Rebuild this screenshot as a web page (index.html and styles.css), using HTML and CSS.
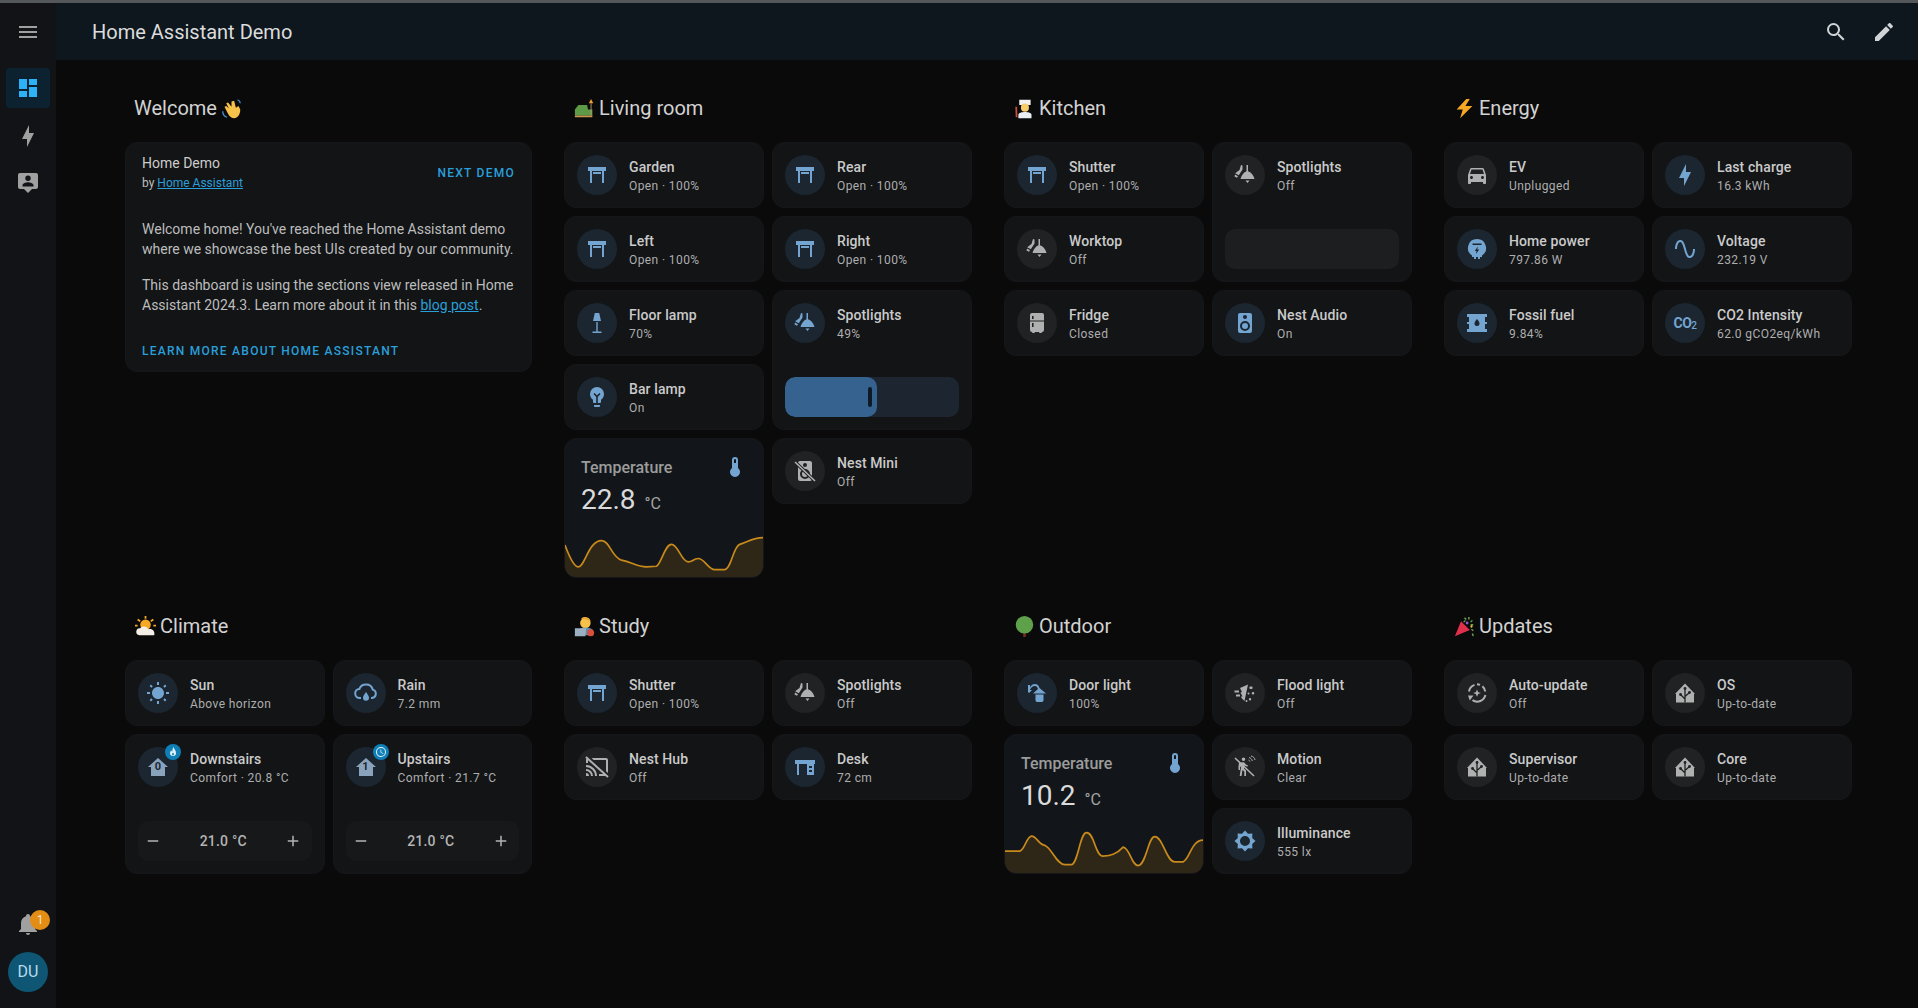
FILE: index.html
```html
<!DOCTYPE html>
<html>
  <head>
    <title>Home Assistant Demo</title>
    <link rel="stylesheet" href="styles.css">
  </head>
  <body>
    <svg class="icon-defs">
      <symbol id="i-menu" viewBox="0 0 24 24"><path d="M3,6H21V8H3V6M3,11H21V13H3V11M3,16H21V18H3V16Z"/></symbol>
      <symbol id="i-dashboard" viewBox="0 0 24 24"><path d="M13,3V9H21V3M13,21H21V11H13M3,21H11V15H3M3,13H11V3H3V13Z"/></symbol>
      <symbol id="i-bolt" viewBox="0 0 24 24"><path d="M11,15H6L13,1V9H18L11,23V15Z"/></symbol>
      <symbol id="i-person-msg" viewBox="0 0 24 24"><path fill-rule="evenodd" d="M4 2H20C21.1 2 22 2.9 22 4V16C22 17.1 21.1 18 20 18H16L12 22L8 18H4C2.9 18 2 17.1 2 16V4C2 2.9 2.9 2 4 2ZM12 4.5A2.7 2.7 0 1 0 12 9.9A2.7 2.7 0 1 0 12 4.5ZM6.5 15.5H17.5V14.2C17.5 12.3 14 11.3 12 11.3C10 11.3 6.5 12.3 6.5 14.2Z"/></symbol>
      <symbol id="i-search" viewBox="0 0 24 24"><path d="M9.5,3A6.5,6.5 0 0,1 16,9.5C16,11.11 15.41,12.59 14.44,13.73L14.71,14H15.5L20.5,19L19,20.5L14,15.5V14.71L13.73,14.44C12.59,15.41 11.11,16 9.5,16A6.5,6.5 0 0,1 3,9.5A6.5,6.5 0 0,1 9.5,3M9.5,5C7,5 5,7 5,9.5C5,12 7,14 9.5,14C12,14 14,12 14,9.5C14,7 12,5 9.5,5Z"/></symbol>
      <symbol id="i-pencil" viewBox="0 0 24 24"><path d="M20.71,7.04C21.1,6.65 21.1,6 20.71,5.63L18.37,3.29C18,2.9 17.35,2.9 16.96,3.29L15.12,5.12L18.87,8.87M3,17.25V21H6.75L17.81,9.93L14.06,6.18L3,17.25Z"/></symbol>
      <symbol id="i-bell" viewBox="0 0 24 24"><path d="M21,19V20H3V19L5,17V11C5,7.9 7.03,5.17 10,4.29C10,4.19 10,4.1 10,4A2,2 0 0,1 12,2A2,2 0 0,1 14,4C14,4.1 14,4.19 14,4.29C16.97,5.17 19,7.9 19,11V17L21,19M14,21A2,2 0 0,1 12,23A2,2 0 0,1 10,21"/></symbol>
      <symbol id="i-shutter" viewBox="0 0 24 24"><path d="M3 4H21V8H19V20H17V8H7V20H5V8H3V4M8 9H16V11H8V9Z"/></symbol>
      <symbol id="i-floorlamp" viewBox="0 0 24 24"><path d="M9.8 2H14.2L16 10H8L9.8 2M11.3 11H12.7V20.5H16.5V22H7.5V20.5H11.3V11Z"/></symbol>
      <symbol id="i-spots" viewBox="0 0 24 24"><path d="M13.5 2H15V8.2C18 9 20.5 12 21.5 16H7.5C8.5 12 11 9 13.5 8.2ZM12.5 17.5H16.5L14.5 20ZM8 2L9.5 2.6V6.5L5.8 12.2L2.2 10.2L6.5 7ZM2 11.5L5 13.2L4 14.8L1.5 13.4Z"/></symbol>
      <symbol id="i-bulb" viewBox="0 0 24 24"><path d="M12,2A7,7 0 0,0 5,9C5,11.38 6.19,13.47 8,14.74V17A1,1 0 0,0 9,18H15A1,1 0 0,0 16,17V14.74C17.81,13.47 19,11.38 19,9A7,7 0 0,0 12,2M9,21A1,1 0 0,0 10,22H14A1,1 0 0,0 15,21V20H9V21Z"/><path d="M9 8.5L12 11.5L15 8.5M12 11.5V18" fill="none" stroke="#1a2530" stroke-width="1.6"/></symbol>
      <symbol id="i-speaker" viewBox="0 0 24 24"><path d="M12,12A3,3 0 0,0 9,15A3,3 0 0,0 12,18A3,3 0 0,0 15,15A3,3 0 0,0 12,12M12,20A5,5 0 0,1 7,15A5,5 0 0,1 12,10A5,5 0 0,1 17,15A5,5 0 0,1 12,20M12,4A2,2 0 0,1 14,6A2,2 0 0,1 12,8C10.89,8 10,7.1 10,6C10,4.89 10.89,4 12,4M17,2H7C5.89,2 5,2.89 5,4V20A2,2 0 0,0 7,22H17A2,2 0 0,0 19,20V4C19,2.89 18.1,2 17,2Z"/></symbol>
      <symbol id="i-speaker-off" viewBox="0 0 24 24"><path d="M12,12A3,3 0 0,0 9,15A3,3 0 0,0 12,18A3,3 0 0,0 15,15A3,3 0 0,0 12,12M12,20A5,5 0 0,1 7,15A5,5 0 0,1 12,10A5,5 0 0,1 17,15A5,5 0 0,1 12,20M12,4A2,2 0 0,1 14,6A2,2 0 0,1 12,8C10.89,8 10,7.1 10,6C10,4.89 10.89,4 12,4M17,2H7C5.89,2 5,2.89 5,4V20A2,2 0 0,0 7,22H17A2,2 0 0,0 19,20V4C19,2.89 18.1,2 17,2Z"/><path d="M2 3L22 22" stroke="#202223" stroke-width="3.4"/><path d="M2 3L22 22" stroke="currentColor" stroke-width="1.6"/></symbol>
      <symbol id="i-fridge" viewBox="0 0 24 24"><path d="M7 2H17A2 2 0 0 1 19 4V9.5H5V4A2 2 0 0 1 7 2ZM5 10.5H19V19A2 2 0 0 1 17 21L16.5 22H14.5L14 21H10L9.5 22H7.5L7 21A2 2 0 0 1 5 19ZM7 5V8H8.6V5ZM7 12V16H8.6V12Z" fill-rule="evenodd"/></symbol>
      <symbol id="i-car" viewBox="0 0 24 24"><path d="M18.92 6.01C18.72 5.42 18.16 5 17.5 5H6.5C5.84 5 5.29 5.42 5.08 6.01L3 12V20C3 20.55 3.45 21 4 21H5C5.55 21 6 20.55 6 20V19H18V20C18 20.55 18.45 21 19 21H20C20.55 21 21 20.55 21 20V12L18.92 6.01M6.5 16C5.67 16 5 15.33 5 14.5S5.67 13 6.5 13 8 13.67 8 14.5 7.33 16 6.5 16M17.5 16C16.67 16 16 15.33 16 14.5S16.67 13 17.5 13 19 13.67 19 14.5 18.33 16 17.5 16M5 11L6.5 6.5H17.5L19 11H5Z"/></symbol>
      <symbol id="i-meter" viewBox="0 0 24 24"><path fill-rule="evenodd" d="M12 2A9 9 0 0 1 17 18.5V20H15V22H13V20H11V22H9V20H7V18.5A9 9 0 0 1 12 2ZM7.5 6.5V8H16.5V6.5ZM12.8 9.5L9.8 14H11.5L11 17L14.2 12.5H12.3Z"/></symbol>
      <symbol id="i-sine" viewBox="0 0 24 24"><path d="M16.5,21C13.5,21 12.31,16.76 11.05,12.28C10.14,9.04 9,5 7.5,5C4.11,5 4,11.93 4,12H2C2,11.63 2.06,3 7.5,3C10.5,3 11.71,7.25 12.97,11.74C13.83,14.8 15,19 16.5,19C19.94,19 20.03,12.07 20.03,12H22.03C22.03,12.37 21.97,21 16.5,21Z"/></symbol>
      <symbol id="i-barrel" viewBox="0 0 24 24"><path fill-rule="evenodd" d="M2 3H22V6H20V11H22V13H20V18H22V21H2V18H4V13H2V11H4V6H2ZM12 8C10.5 10 9.5 11.2 9.5 12.6A2.5 2.5 0 0 0 14.5 12.6C14.5 11.2 13.5 10 12 8Z"/></symbol>
      <symbol id="i-sun" viewBox="0 0 24 24"><path d="M3.55 19.09L4.96 20.5L6.76 18.71L5.34 17.29M12 6C8.69 6 6 8.69 6 12S8.69 18 12 18 18 15.31 18 12C18 8.68 15.31 6 12 6M20 13H23V11H20M17.24 18.71L19.04 20.5L20.45 19.09L18.66 17.29M20.45 5L19.04 3.6L17.24 5.39L18.66 6.81M13 1H11V4H13M6.76 5.39L4.96 3.6L3.55 5L5.34 6.81L6.76 5.39M1 13H4V11H1M13 20H11V23H13"/></symbol>
      <symbol id="i-rain" viewBox="0 0 24 24"><path d="M7 17H6A4.5 4.5 0 0 1 5.4 8C6.3 5.2 8.9 3.5 12 3.5C15.3 3.5 18 5.6 18.7 8.6A4.3 4.3 0 0 1 18 17H17" fill="none" stroke="currentColor" stroke-width="2"/><path d="M12 11C10.2 13.6 9 15 9 16.7A3 3 0 0 0 15 16.7C15 15 13.8 13.6 12 11Z"/></symbol>
      <symbol id="i-house0" viewBox="0 0 24 24"><path d="M12 3L2 12H5V21H19V12H22Z"/></symbol>
      <symbol id="i-fire" viewBox="0 0 24 24"><path d="M13 2C13.5 6 18 8 18 14A6 6 0 0 1 6 14C6 11.5 7.5 10 8.5 8.5C9 10 9.5 11 10.5 11.5C11 8.5 11 5 13 2ZM12 13C11 14.5 10 15.3 10 16.5A2 2 0 0 0 14 16.5C14 15.3 13 14.5 12 13Z" fill-rule="evenodd"/></symbol>
      <symbol id="i-clock" viewBox="0 0 24 24"><path d="M12,20A8,8 0 0,0 20,12A8,8 0 0,0 12,4A8,8 0 0,0 4,12A8,8 0 0,0 12,20M12,2A10,10 0 0,1 22,12A10,10 0 0,1 12,22C6.47,22 2,17.5 2,12A10,10 0 0,1 12,2M12.5,7V12.25L17,14.92L16.25,16.15L11,13V7H12.5Z"/></symbol>
      <symbol id="i-minus" viewBox="0 0 24 24"><path d="M19,13H5V11H19V13Z"/></symbol>
      <symbol id="i-plus" viewBox="0 0 24 24"><path d="M19,13H13V19H11V13H5V11H11V5H13V11H19V13Z"/></symbol>
      <symbol id="i-cast-off" viewBox="0 0 24 24"><path d="M1.6,1.27L0.25,2.75L1.41,3.8C1.16,4.13 1,4.55 1,5V8H3V5.23L18.2,19H14V21H20.41L22.31,22.72L23.65,21.24M6.5,3L8.7,5H21V16.14L23,17.95V5C23,3.89 22.1,3 21,3M1,10V12A9,9 0 0,1 10,21H12C12,14.92 7.08,10 1,10M1,14V16A5,5 0 0,1 6,21H8A7,7 0 0,0 1,14M1,18V21H4A3,3 0 0,0 1,18Z"/></symbol>
      <symbol id="i-desk" viewBox="0 0 24 24"><path fill-rule="evenodd" d="M2 5H22V9H21V20H14V9H6V20H4V9H2ZM16 11V13H19V11ZM16 15V17H19V15Z"/></symbol>
      <symbol id="i-doorlight" viewBox="0 0 24 24"><path d="M3 11V4H5V6.5C6 4 8 3 10 3C12 3 14 4.5 14.5 7L21 12.5H8L13 8C12.5 6 11.3 5 10 5C7.5 5 5.5 7 5 9L7 9L4 12ZM10.5 13.5H18.5V19C18.5 20.5 17.5 21 16.5 21H12.5C11.5 21 10.5 20.5 10.5 19Z"/></symbol>
      <symbol id="i-flood" viewBox="0 0 24 24"><path d="M1.5 9.5H6V11.5H1.5ZM3 13.5H7V15.5H3ZM7 7L15 3.5L11.5 20L8.5 17L8 15.5H9.5L7.5 11.5L9 11ZM18 5.5A1.3 1.3 0 1 0 18 8A1.3 1.3 0 1 0 18 5.5ZM20 11A1.3 1.3 0 1 0 20 13.6A1.3 1.3 0 1 0 20 11ZM15.5 11.5A1 1 0 1 0 15.5 13.5A1 1 0 1 0 15.5 11.5ZM17 17A1.2 1.2 0 1 0 17 19.4A1.2 1.2 0 1 0 17 17ZM13.5 19A1 1 0 1 0 13.5 21A1 1 0 1 0 13.5 19Z"/></symbol>
      <symbol id="i-motion-off" viewBox="0 0 24 24"><path d="M10.5 2.5A1.8 1.8 0 1 0 10.5 6.1A1.8 1.8 0 1 0 10.5 2.5ZM6 7.5L11 7.3L13 9.5L15 10.5L14.3 11.8L11.6 10.5L11 13.5L13 15.5V21H11.3V16.5L9.5 15L8.5 21H6.7L8.2 11L7 12.5V15H5.5V11.5L6 7.5Z"/><path d="M2 3L21 21" stroke="currentColor" stroke-width="1.6"/><path d="M16 2.5C17.5 2.8 19 4.2 19.3 6M15.5 5C16.2 5.2 16.8 5.8 17 6.5M18 1C20 1.3 21.8 3 22 5" fill="none" stroke="currentColor" stroke-width="1"/></symbol>
      <symbol id="i-lux" viewBox="0 0 24 24"><path fill-rule="evenodd" d="M12 1.5L15 4.8L19.4 4.6L19.2 9L22.5 12L19.2 15L19.4 19.4L15 19.2L12 22.5L9 19.2L4.6 19.4L4.8 15L1.5 12L4.8 9L4.6 4.6L9 4.8ZM12 7A5 5 0 1 0 12 17A5 5 0 1 0 12 7Z"/></symbol>
      <symbol id="i-auto" viewBox="0 0 24 24"><path d="M12 8.5L13.2 11.2L16 12L13.2 13L12 15.7L10.8 13L8 12L10.8 11.2Z"/><path d="M4 10.5A8.4 8.4 0 0 1 9.5 3.9M12 3.3A8.4 8.4 0 0 1 15 3.9M17.4 5.2A8.4 8.4 0 0 1 20.2 10.5M20.4 14A8.4 8.4 0 0 1 7.5 19.2" fill="none" stroke="currentColor" stroke-width="2"/><path d="M3 14.5H8.5L4.8 19.5Z"/></symbol>
      <symbol id="i-ha" viewBox="0 0 24 24"><path d="M2 13L12 2.5L22 13H21V21.5H3V13Z"/><path d="M12 21.5V7M12 18L7.5 13.5M12 15.5L16.5 11.5" fill="none" stroke="#202223" stroke-width="1.3"/><circle cx="12" cy="7.5" r="1.4" fill="#202223"/><circle cx="7.5" cy="13.5" r="1.4" fill="#202223"/><circle cx="16.5" cy="11.5" r="1.4" fill="#202223"/></symbol>
      <symbol id="i-thermo" viewBox="0 0 24 24"><path d="M15 13V5A3 3 0 0 0 9 5V13A5 5 0 1 0 15 13M12 4A1 1 0 0 1 13 5V8H11V5A1 1 0 0 1 12 4Z"/></symbol>

      <symbol id="e-wave" viewBox="0 0 24 24"><path d="M8 5L12 10L12 4L15 3L17 11L20 9L22 13C22 19 19 23 15 23C11 23 9 20 7 16L4 10L6 9L9 12L6 6Z" fill="#f7c24a"/><path d="M2 15C2 18 4 21 7 22M19 2C21 3 22 4 22 6" fill="none" stroke="#4a8fd0" stroke-width="1.5"/></symbol>
      <symbol id="e-sofa" viewBox="0 0 24 24"><path d="M1 13L5 8H15L16 13H21V20H1Z" fill="#5c9a48"/><path d="M1 20H21V22H1Z" fill="#c89a50"/><path d="M17 6L19.5 1L22 6Z" fill="#f0a030"/><path d="M19 6H20V20H19Z" fill="#b8a070"/></symbol>
      <symbol id="e-chef" viewBox="0 0 24 24"><path d="M6 2H19V8H6Z" fill="#f0f0f0"/><circle cx="12.5" cy="11" r="4.6" fill="#f7cc6a"/><path d="M5 23V19C5 17 9 16 12.5 16C16 16 20 17 20 19V23Z" fill="#e8eef2"/><path d="M1.5 10L3.5 10L4 22H2Z" fill="#c8503c"/></symbol>
      <symbol id="e-energy" viewBox="0 0 24 24"><path d="M14 1L3 13H10L7 23L21 9H13L18 1Z" fill="#f7a823"/></symbol>
      <symbol id="e-climate" viewBox="0 0 24 24"><circle cx="12" cy="10" r="6" fill="#f7a823"/><path d="M12 0V3M3 4L6 6M21 4L18 6M0 11H3M24 11H21" stroke="#f7a823" stroke-width="2"/><path d="M5 22A4 4 0 0 1 6 14C8 11 14 11 15 15C20 14 23 17 22 22Z" fill="#f4efe6"/></symbol>
      <symbol id="e-study" viewBox="0 0 24 24"><circle cx="13" cy="8" r="6" fill="#f7c24a"/><path d="M8 3C10 0 18 0 19 6L14 4Z" fill="#e8a83a"/><path d="M6 15C9 13 17 13 21 15L22 22H6Z" fill="#5a8ab8"/><path d="M1 14H14L13 23H1Z" fill="#9ab0c0"/><circle cx="19" cy="19" r="4" fill="#d8503c"/></symbol>
      <symbol id="e-tree" viewBox="0 0 24 24"><path d="M10.5 16H13.5V24H10.5Z" fill="#7a2a1a"/><circle cx="12" cy="10" r="10" fill="#5fa04a"/></symbol>
      <symbol id="e-party" viewBox="0 0 24 24"><path d="M1 23L8 6L18 16Z" fill="#e0304c"/><path d="M12 2L14 4M17 1V4M21 5L19 7M22 10H19M20 15L22 17M21 20L22 23M11 7L13 5" stroke="#6aa84f" stroke-width="1.6"/><circle cx="15" cy="8" r="1.6" fill="#8a5ac8"/><circle cx="20" cy="12" r="1.3" fill="#f7c24a"/></symbol>
    </svg>

    <div class="topstrip"></div>

    <div class="app">
      <nav class="sidebar">
        <div class="side-menu"><svg class="icon"><use href="#i-menu"/></svg></div>
        <div class="side-item active"><svg class="icon"><use href="#i-dashboard"/></svg></div>
        <div class="side-item"><svg class="icon"><use href="#i-bolt"/></svg></div>
        <div class="side-item"><svg class="icon"><use href="#i-person-msg"/></svg></div>
        <div class="side-spacer"></div>
        <div class="side-bell">
          <svg class="icon"><use href="#i-bell"/></svg>
          <span class="bell-badge">1</span>
        </div>
        <div class="avatar">DU</div>
      </nav>

      <div class="main">
        <header class="topbar">
          <div class="topbar-title">Home Assistant Demo</div>
          <svg class="icon"><use href="#i-search"/></svg>
          <svg class="icon"><use href="#i-pencil"/></svg>
        </header>

        <div class="sections">

          <section>
            <h2>Welcome <svg class="emoji"><use href="#e-wave"/></svg></h2>
            <div class="welcome">
              <div class="welcome-head">
                <div>
                  <div class="welcome-title">Home Demo</div>
                  <div class="welcome-by">by <a href="#">Home Assistant</a></div>
                </div>
                <div class="action">NEXT DEMO</div>
              </div>
              <p>Welcome home! You've reached the Home Assistant demo where we showcase the best UIs created by our community.</p>
              <p>This dashboard is using the sections view released in Home Assistant 2024.3. Learn more about it in this <a href="#">blog post</a>.</p>
              <div class="action learn">LEARN MORE ABOUT HOME ASSISTANT</div>
            </div>
          </section>

          <section>
            <h2><svg class="emoji"><use href="#e-sofa"/></svg> Living room</h2>
            <div class="tiles">
              <div class="tile on"><div class="tile-row"><div class="shape"><svg class="icon"><use href="#i-shutter"/></svg></div><div><div class="name">Garden</div><div class="state">Open · 100%</div></div></div></div>
              <div class="tile on"><div class="tile-row"><div class="shape"><svg class="icon"><use href="#i-shutter"/></svg></div><div><div class="name">Rear</div><div class="state">Open · 100%</div></div></div></div>
              <div class="tile on"><div class="tile-row"><div class="shape"><svg class="icon"><use href="#i-shutter"/></svg></div><div><div class="name">Left</div><div class="state">Open · 100%</div></div></div></div>
              <div class="tile on"><div class="tile-row"><div class="shape"><svg class="icon"><use href="#i-shutter"/></svg></div><div><div class="name">Right</div><div class="state">Open · 100%</div></div></div></div>
              <div class="tile on"><div class="tile-row"><div class="shape"><svg class="icon"><use href="#i-floorlamp"/></svg></div><div><div class="name">Floor lamp</div><div class="state">70%</div></div></div></div>
              <div class="tile on tall"><div class="tile-row"><div class="shape"><svg class="icon"><use href="#i-spots"/></svg></div><div><div class="name">Spotlights</div><div class="state">49%</div></div></div>
                <div class="slider"><div class="slider-fill" style="width: 53%"></div></div>
              </div>
              <div class="tile on"><div class="tile-row"><div class="shape"><svg class="icon"><use href="#i-bulb"/></svg></div><div><div class="name">Bar lamp</div><div class="state">On</div></div></div></div>
              <div class="sensor tall">
                <div class="sensor-head"><span>Temperature</span><svg class="icon"><use href="#i-thermo"/></svg></div>
                <div class="sensor-value">22.8 <small>°C</small></div>
                <svg class="chart" viewBox="45 555 595 125" preserveAspectRatio="none">
                  <path class="chart-fill" d="M45 585C60 625 75 650 85 650C105 650 115 572 155 572C180 572 185 622 215 630C245 635 260 650 290 650L320 648C335 640 345 583 365 583C385 583 395 635 415 635C430 635 430 625 445 625C465 625 475 658 495 658L525 658C545 655 550 590 570 583C590 578 610 563 640 563V680H45Z"/>
                  <path class="chart-line" d="M45 585C60 625 75 650 85 650C105 650 115 572 155 572C180 572 185 622 215 630C245 635 260 650 290 650L320 648C335 640 345 583 365 583C385 583 395 635 415 635C430 635 430 625 445 625C465 625 475 658 495 658L525 658C545 655 550 590 570 583C590 578 610 563 640 563"/>
                </svg>
              </div>
              <div class="tile"><div class="tile-row"><div class="shape"><svg class="icon"><use href="#i-speaker-off"/></svg></div><div><div class="name">Nest Mini</div><div class="state">Off</div></div></div></div>
            </div>
          </section>

          <section>
            <h2><svg class="emoji"><use href="#e-chef"/></svg> Kitchen</h2>
            <div class="tiles">
              <div class="tile on"><div class="tile-row"><div class="shape"><svg class="icon"><use href="#i-shutter"/></svg></div><div><div class="name">Shutter</div><div class="state">Open · 100%</div></div></div></div>
              <div class="tile tall"><div class="tile-row"><div class="shape"><svg class="icon"><use href="#i-spots"/></svg></div><div><div class="name">Spotlights</div><div class="state">Off</div></div></div>
                <div class="slider"></div>
              </div>
              <div class="tile"><div class="tile-row"><div class="shape"><svg class="icon"><use href="#i-spots"/></svg></div><div><div class="name">Worktop</div><div class="state">Off</div></div></div></div>
              <div class="tile"><div class="tile-row"><div class="shape"><svg class="icon"><use href="#i-fridge"/></svg></div><div><div class="name">Fridge</div><div class="state">Closed</div></div></div></div>
              <div class="tile on"><div class="tile-row"><div class="shape"><svg class="icon"><use href="#i-speaker"/></svg></div><div><div class="name">Nest Audio</div><div class="state">On</div></div></div></div>
            </div>
          </section>

          <section>
            <h2><svg class="emoji"><use href="#e-energy"/></svg> Energy</h2>
            <div class="tiles">
              <div class="tile"><div class="tile-row"><div class="shape"><svg class="icon"><use href="#i-car"/></svg></div><div><div class="name">EV</div><div class="state">Unplugged</div></div></div></div>
              <div class="tile on"><div class="tile-row"><div class="shape"><svg class="icon"><use href="#i-bolt"/></svg></div><div><div class="name">Last charge</div><div class="state">16.3 kWh</div></div></div></div>
              <div class="tile on"><div class="tile-row"><div class="shape"><svg class="icon"><use href="#i-meter"/></svg></div><div><div class="name">Home power</div><div class="state">797.86 W</div></div></div></div>
              <div class="tile on"><div class="tile-row"><div class="shape"><svg class="icon"><use href="#i-sine"/></svg></div><div><div class="name">Voltage</div><div class="state">232.19 V</div></div></div></div>
              <div class="tile on"><div class="tile-row"><div class="shape"><svg class="icon"><use href="#i-barrel"/></svg></div><div><div class="name">Fossil fuel</div><div class="state">9.84%</div></div></div></div>
              <div class="tile on"><div class="tile-row"><div class="shape"><span class="co2">CO<sub>2</sub></span></div><div><div class="name">CO2 Intensity</div><div class="state">62.0 gCO2eq/kWh</div></div></div></div>
            </div>
          </section>

          <section>
            <h2><svg class="emoji"><use href="#e-climate"/></svg> Climate</h2>
            <div class="tiles">
              <div class="tile on"><div class="tile-row"><div class="shape"><svg class="icon"><use href="#i-sun"/></svg></div><div><div class="name">Sun</div><div class="state">Above horizon</div></div></div></div>
              <div class="tile on"><div class="tile-row"><div class="shape"><svg class="icon"><use href="#i-rain"/></svg></div><div><div class="name">Rain</div><div class="state">7.2 mm</div></div></div></div>
              <div class="tile on tall"><div class="tile-row"><div class="shape house"><svg class="icon"><use href="#i-house0"/></svg><span class="floor">0</span><span class="shape-badge"><svg class="icon"><use href="#i-fire"/></svg></span></div><div><div class="name">Downstairs</div><div class="state">Comfort · 20.8 °C</div></div></div>
                <div class="stepper"><svg class="icon"><use href="#i-minus"/></svg><span>21.0 °C</span><svg class="icon"><use href="#i-plus"/></svg></div>
              </div>
              <div class="tile on tall"><div class="tile-row"><div class="shape house"><svg class="icon"><use href="#i-house0"/></svg><span class="floor">1</span><span class="shape-badge"><svg class="icon"><use href="#i-clock"/></svg></span></div><div><div class="name">Upstairs</div><div class="state">Comfort · 21.7 °C</div></div></div>
                <div class="stepper"><svg class="icon"><use href="#i-minus"/></svg><span>21.0 °C</span><svg class="icon"><use href="#i-plus"/></svg></div>
              </div>
            </div>
          </section>

          <section>
            <h2><svg class="emoji"><use href="#e-study"/></svg> Study</h2>
            <div class="tiles">
              <div class="tile on"><div class="tile-row"><div class="shape"><svg class="icon"><use href="#i-shutter"/></svg></div><div><div class="name">Shutter</div><div class="state">Open · 100%</div></div></div></div>
              <div class="tile"><div class="tile-row"><div class="shape"><svg class="icon"><use href="#i-spots"/></svg></div><div><div class="name">Spotlights</div><div class="state">Off</div></div></div></div>
              <div class="tile"><div class="tile-row"><div class="shape"><svg class="icon"><use href="#i-cast-off"/></svg></div><div><div class="name">Nest Hub</div><div class="state">Off</div></div></div></div>
              <div class="tile on"><div class="tile-row"><div class="shape"><svg class="icon"><use href="#i-desk"/></svg></div><div><div class="name">Desk</div><div class="state">72 cm</div></div></div></div>
            </div>
          </section>

          <section>
            <h2><svg class="emoji"><use href="#e-tree"/></svg> Outdoor</h2>
            <div class="tiles">
              <div class="tile on"><div class="tile-row"><div class="shape"><svg class="icon"><use href="#i-doorlight"/></svg></div><div><div class="name">Door light</div><div class="state">100%</div></div></div></div>
              <div class="tile"><div class="tile-row"><div class="shape"><svg class="icon"><use href="#i-flood"/></svg></div><div><div class="name">Flood light</div><div class="state">Off</div></div></div></div>
              <div class="sensor tall">
                <div class="sensor-head"><span>Temperature</span><svg class="icon"><use href="#i-thermo"/></svg></div>
                <div class="sensor-value">10.2 <small>°C</small></div>
                <svg class="chart" viewBox="15 695 595 125" preserveAspectRatio="none">
                  <path class="chart-fill" d="M15 755L60 755C75 750 80 710 95 710C110 710 115 735 135 738C155 745 170 795 195 795L215 795C235 790 240 700 260 700C285 700 285 770 310 770C330 768 350 765 370 743C390 745 395 798 415 798C440 795 445 712 465 712C490 712 500 787 525 787L550 787C570 780 575 722 610 722V820H15Z"/>
                  <path class="chart-line" d="M15 755L60 755C75 750 80 710 95 710C110 710 115 735 135 738C155 745 170 795 195 795L215 795C235 790 240 700 260 700C285 700 285 770 310 770C330 768 350 765 370 743C390 745 395 798 415 798C440 795 445 712 465 712C490 712 500 787 525 787L550 787C570 780 575 722 610 722"/>
                </svg>
              </div>
              <div class="tile"><div class="tile-row"><div class="shape"><svg class="icon"><use href="#i-motion-off"/></svg></div><div><div class="name">Motion</div><div class="state">Clear</div></div></div></div>
              <div class="tile on"><div class="tile-row"><div class="shape"><svg class="icon"><use href="#i-lux"/></svg></div><div><div class="name">Illuminance</div><div class="state">555 lx</div></div></div></div>
            </div>
          </section>

          <section>
            <h2><svg class="emoji"><use href="#e-party"/></svg> Updates</h2>
            <div class="tiles">
              <div class="tile"><div class="tile-row"><div class="shape"><svg class="icon"><use href="#i-auto"/></svg></div><div><div class="name">Auto-update</div><div class="state">Off</div></div></div></div>
              <div class="tile"><div class="tile-row"><div class="shape"><svg class="icon"><use href="#i-ha"/></svg></div><div><div class="name">OS</div><div class="state">Up-to-date</div></div></div></div>
              <div class="tile"><div class="tile-row"><div class="shape"><svg class="icon"><use href="#i-ha"/></svg></div><div><div class="name">Supervisor</div><div class="state">Up-to-date</div></div></div></div>
              <div class="tile"><div class="tile-row"><div class="shape"><svg class="icon"><use href="#i-ha"/></svg></div><div><div class="name">Core</div><div class="state">Up-to-date</div></div></div></div>
            </div>
          </section>

        </div>
      </div>
    </div>
  </body>
</html>
```
FILE: styles.css
```css
* {
    box-sizing: border-box;
}

html, body {
    margin: 0;
    height: 100%;
    overflow: hidden;
}

body {
    background: #0a0a0a;
    color: #d8d8d8;
    font-family: Roboto, "Liberation Sans", sans-serif;
    font-size: 14px;
}

.icon-defs {
    display: none;
}

.icon {
    width: 24px;
    height: 24px;
    fill: currentColor;
    flex: none;
    display: block;
}

.topstrip {
    height: 3px;
    background: #55585a;
}

.app {
    display: flex;
    height: calc(100% - 3px);
}

/* sidebar */
.sidebar {
    width: 56px;
    flex: none;
    background: #111316;
    color: #a0a0a0;
    display: flex;
    flex-direction: column;
    align-items: center;
    padding-bottom: 16px;
}

.side-menu {
    height: 57px;
    display: flex;
    align-items: center;
    justify-content: center;
    margin-bottom: 8px;
}

.side-item {
    width: 44px;
    height: 40px;
    margin-bottom: 7px;
    border-radius: 4px;
    display: flex;
    align-items: center;
    justify-content: center;
}

.side-item.active {
    background: #0d2231;
    color: #2cb2f5;
    margin-bottom: 8px;
}

.side-spacer {
    flex: 1;
}

.side-bell {
    position: relative;
    width: 44px;
    height: 40px;
    margin-bottom: 8px;
    display: flex;
    align-items: center;
    justify-content: center;
}

.bell-badge {
    position: absolute;
    top: 6px;
    left: 24px;
    width: 20px;
    height: 20px;
    border-radius: 50%;
    background: #e48d15;
    color: #f5e6c8;
    font-size: 12px;
    line-height: 20px;
    text-align: center;
}

.avatar {
    width: 40px;
    height: 40px;
    border-radius: 50%;
    background: #0e5674;
    color: #b8dcec;
    font-size: 16px;
    line-height: 40px;
    text-align: center;
}

/* header */
.main {
    flex: 1;
    min-width: 0;
}

.topbar {
    height: 57px;
    background: #0e171e;
    color: #d0d4d6;
    display: flex;
    align-items: center;
    gap: 24px;
    padding: 0 22px 0 36px;
}

.topbar-title {
    flex: 1;
    font-size: 20px;
    color: #dcdcdc;
}

/* sections */
.sections {
    display: grid;
    grid-template-columns: 407px repeat(3, 408px);
    gap: 32px;
    align-items: start;
    padding: 32px 0 0 69px;
}

h2 {
    margin: 0 0 18px;
    height: 32px;
    padding-left: 9px;
    font-size: 20px;
    font-weight: 400;
    line-height: 32px;
    color: #d2d2d2;
    display: flex;
    align-items: center;
    gap: 4px;
}

section + section h2 {
    padding-left: 10px;
}

.emoji {
    width: 21px;
    height: 23px;
    flex: none;
}

.tiles {
    display: grid;
    grid-template-columns: 1fr 1fr;
    grid-auto-rows: 66px;
    gap: 8px;
}

.tile, .sensor, .welcome {
    background: #121416;
    border: 1px solid #141619;
    border-radius: 12px;
}

.tile {
    padding: 12px;
    display: flex;
    flex-direction: column;
    justify-content: space-between;
}

.tall {
    grid-row: span 2;
}

.tile-row {
    display: flex;
    align-items: center;
    gap: 12px;
}

.shape {
    position: relative;
    width: 40px;
    height: 40px;
    border-radius: 50%;
    background: #202223;
    color: #b0b0b0;
    flex: none;
    display: flex;
    align-items: center;
    justify-content: center;
}

.tile.on .shape {
    background: #1c2630;
    color: #74a5d1;
}

.tile.on .shape.house {
    color: #8aa3bd;
}

.name {
    margin-top: 2px;
    font-weight: 500;
    line-height: 20px;
    letter-spacing: 0.1px;
    color: #cacaca;
}

.state {
    font-size: 12px;
    line-height: 18px;
    letter-spacing: 0.4px;
    color: #aeaeae;
}

.co2 {
    font-size: 14px;
    font-weight: 700;
    letter-spacing: -0.5px;
}

.co2 sub {
    font-size: 10px;
    font-weight: 500;
    vertical-align: -1px;
}

.floor {
    position: absolute;
    top: 13px;
    left: 0;
    width: 100%;
    text-align: center;
    font-size: 11px;
    font-weight: 700;
    color: #1c2630;
}

.shape-badge {
    position: absolute;
    top: -3px;
    right: -3px;
    width: 16px;
    height: 16px;
    border-radius: 50%;
    background: #0f7fb8;
    color: #e4f2fa;
    display: flex;
    align-items: center;
    justify-content: center;
}

.shape-badge .icon {
    width: 12px;
    height: 12px;
}

.slider {
    height: 40px;
    border-radius: 10px;
    background: #1c1e20;
    overflow: hidden;
}

.tile.on .slider {
    background: #1d2630;
}

.slider-fill {
    height: 100%;
    background: #36628f;
    border-radius: 10px;
    position: relative;
}

.slider-fill::after {
    content: "";
    position: absolute;
    top: 10px;
    right: 5px;
    width: 4px;
    height: 20px;
    border-radius: 2px;
    background: #0e1a26;
}

.stepper {
    height: 40px;
    border-radius: 10px;
    background: #17181a;
    color: #b4b4b4;
    display: flex;
    align-items: center;
    justify-content: space-between;
    padding: 0 9px 0 6px;
    font-weight: 500;
    letter-spacing: 0.2px;
}

.stepper .icon {
    width: 18px;
    height: 18px;
}

/* sensor card */
.sensor {
    position: relative;
    overflow: hidden;
    background: #12161a;
    display: flex;
    flex-direction: column;
}

.sensor-head {
    display: flex;
    align-items: center;
    justify-content: space-between;
    padding: 16px 16px 0;
    font-size: 16px;
    font-weight: 500;
    color: #9c9c9c;
}

.sensor-head .icon {
    color: #74a5d1;
}

.sensor-value {
    padding: 3px 0 0 16px;
    font-size: 28px;
    line-height: 36px;
    color: #dadada;
}

.sensor-value small {
    font-size: 16px;
    color: #a4a4a4;
    margin-left: 2px;
}

.chart {
    display: block;
    width: 100%;
    height: 42px;
    margin-top: auto;
}

.chart-fill {
    fill: #2e2617;
}

.chart-line {
    fill: none;
    stroke: #c98a1c;
    stroke-width: 5;
}

/* welcome card */
.welcome {
    height: 230px;
    padding: 10px 16px 0;
    display: flex;
    flex-direction: column;
    color: #bdbdbd;
}

.welcome-head {
    display: flex;
    align-items: center;
    justify-content: space-between;
    margin-bottom: 26px;
}

.welcome-title {
    font-size: 14px;
    line-height: 20px;
    color: #cccccc;
}

.welcome-by {
    font-size: 12px;
    line-height: 20px;
}

.welcome a {
    color: #2b9fd9;
}

.welcome p {
    margin: 0 0 16px;
    line-height: 20px;
}

.action {
    font-size: 12px;
    font-weight: 500;
    letter-spacing: 1.25px;
    color: #2b9fd9;
}

.learn {
    margin-top: 13px;
}
```
